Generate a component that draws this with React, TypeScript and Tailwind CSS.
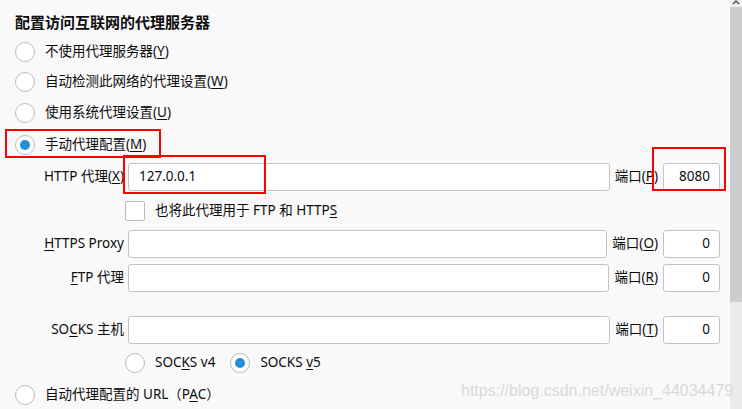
import React from 'react'

const font = "font-['Noto_Sans','Noto_Sans_CJK_SC',sans-serif]"

function Radio({ checked = false }: { checked?: boolean }) {
  return (
    <span className="w-[20px] h-[20px] rounded-full border border-[#bcbcbc] bg-white flex items-center justify-center shrink-0">
      {checked && <span className="w-[10px] h-[10px] rounded-full bg-[#2190d9]" />}
    </span>
  )
}

function Key({ k }: { k: string }) {
  return <span className="underline underline-offset-2">{k}</span>
}

function RadioRow({ h, checked, children }: { h: string; checked?: boolean; children: React.ReactNode }) {
  return (
    <div className={`flex items-center gap-[10px] ml-[15px] ${h}`}>
      <Radio checked={checked} />
      <span>{children}</span>
    </div>
  )
}

function Field({
  label,
  value = '',
  portKey,
  port,
  className = '',
}: {
  label: React.ReactNode
  value?: string
  portKey: string
  port: string
  className?: string
}) {
  return (
    <div className={`flex items-center h-[28px] ${className}`}>
      <div className="w-[124px] text-right whitespace-nowrap">{label}</div>
      <div className="ml-[4px] flex-1 h-full bg-white border border-[#c4c4c4] rounded-[3px] flex items-center pl-[10px]">
        {value}
      </div>
      <span className="mx-[5px] whitespace-nowrap">
        端口(<Key k={portKey} />)
      </span>
      <div className="w-[57px] h-full bg-white border border-[#c4c4c4] rounded-[3px] flex items-center justify-end pr-[9px] mr-[10px]">
        {port}
      </div>
    </div>
  )
}

export default function App() {
  return (
    <div className={`relative w-[742px] h-[409px] overflow-hidden bg-[#f9f9f9] text-[#0c0c0d] text-[13.5px] leading-none flex ${font}`}>
      <div className="w-[730px] flex flex-col">
        <div className="mt-[8px] h-[28px] ml-[15px] flex items-center text-[15px] font-bold">
          配置访问互联网的代理服务器
        </div>
        <RadioRow h="h-[31px]">
          不使用代理服务器(<Key k="Y" />)
        </RadioRow>
        <RadioRow h="h-[30px]">
          自动检测此网络的代理设置(<Key k="W" />)
        </RadioRow>
        <RadioRow h="h-[32px]">
          使用系统代理设置(<Key k="U" />)
        </RadioRow>
        <RadioRow h="h-[32px]" checked>
          手动代理配置(<Key k="M" />)
        </RadioRow>

        <Field
          className="mt-[2px]"
          label={<>HTTP 代理(<Key k="X" />)</>}
          value="127.0.0.1"
          portKey="P"
          port="8080"
        />

        <div className="h-[39px] flex items-center pl-[125px] gap-[10px]">
          <span className="w-[20px] h-[20px] bg-white border border-[#bcbcbc] rounded-[2px]" />
          <span>
            也将此代理用于 FTP 和 HTTP<Key k="S" />
          </span>
        </div>

        <Field label={<><Key k="H" />TTPS Proxy</>} portKey="O" port="0" />
        <Field className="mt-[6px]" label={<><Key k="F" />TP 代理</>} portKey="R" port="0" />
        <Field className="mt-[24px]" label={<>SO<Key k="C" />KS 主机</>} portKey="T" port="0" />

        <div className="h-[38px] flex items-center pl-[125px]">
          <Radio />
          <span className="ml-[10px]">
            SOC<Key k="K" />S v4
          </span>
          <span className="ml-[15px]">
            <Radio checked />
          </span>
          <span className="ml-[10px]">
            SOCKS <Key k="v" />5
          </span>
        </div>

        <RadioRow h="h-[26px]">
          自动代理配置的 URL（P<Key k="A" />C）
        </RadioRow>
      </div>

      {/* scrollbar */}
      <div className="w-[12px] flex flex-col bg-[#ebebeb]">
        <div className="h-[7px] bg-[#f0f0f0] flex justify-center">
          <svg width="8" height="7" viewBox="0 0 8 7">
            <path d="M1 4 L4 1 L7 4" fill="none" stroke="#555" strokeWidth="1.5" />
          </svg>
        </div>
        <div className="h-[295px] bg-[#cdcdcd]" />
      </div>

      {/* annotation boxes */}
      <div className="absolute left-[5px] top-[129px] w-[156px] h-[29px] border-2 border-[#ff0000]" />
      <div className="absolute left-[123px] top-[155px] w-[143px] h-[39px] border-2 border-[#ff0000]" />
      <div className="absolute left-[652px] top-[147px] w-[74px] h-[44px] border-2 border-[#ff0000]" />

      {/* watermark */}
      <div className="absolute left-[461px] top-[381px] text-[16px] leading-[20px] text-[#d9d9d9] font-['Liberation_Sans',sans-serif] whitespace-nowrap">
        https://blog.csdn.net/weixin_44034479
      </div>
    </div>
  )
}
